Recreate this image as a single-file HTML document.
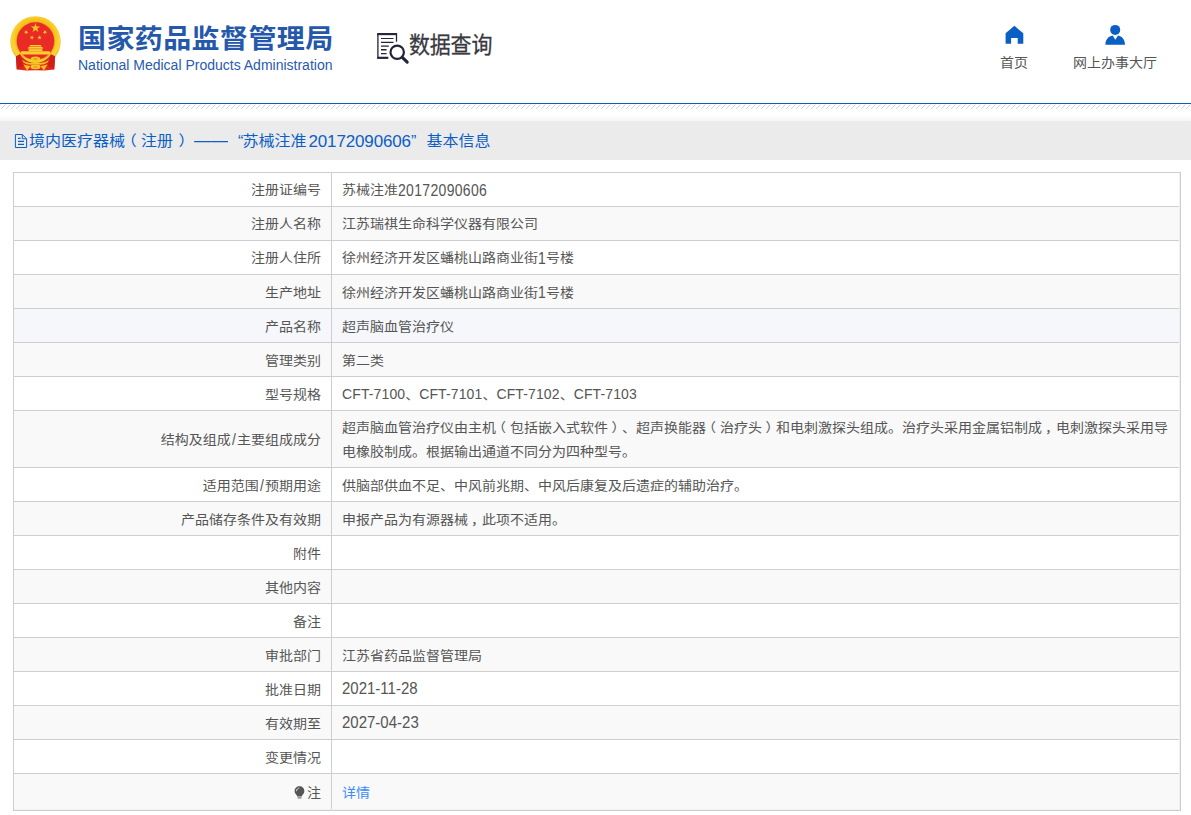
<!DOCTYPE html>
<html lang="zh-CN">
<head>
<meta charset="utf-8">
<title>国家药品监督管理局 数据查询</title>
<style>
*{box-sizing:border-box;margin:0;padding:0}
html,body{width:1191px;height:815px;overflow:hidden;background:#fff}
body{font-family:"Liberation Sans","Noto Sans CJK SC",sans-serif;font-size:14px;color:#555;position:relative}
.abs{position:absolute}
#hdr{position:absolute;left:0;top:0;width:1191px;height:103px;background:#fff}
#emblem{position:absolute;left:0;top:0;width:70px;height:80px}
#cn{position:absolute;left:78px;top:18.500px;transform:scaleY(.95);transform-origin:50% 62%;font-size:28px;line-height:40px;font-weight:700;color:#2558ab;white-space:nowrap;letter-spacing:0.4px}
#en{position:absolute;left:78px;top:56px;font-size:14px;line-height:18px;color:#2a5bad;white-space:nowrap}
#qicon{position:absolute;left:370px;top:25px;width:50px;height:45px}
#qtxt{position:absolute;left:409px;top:28px;transform:scaleY(1.1);transform-origin:50% 50%;font-size:21px;line-height:34px;color:#38383e;-webkit-text-stroke:0.25px #38383e;white-space:nowrap;letter-spacing:-0.2px}
.nav{position:absolute;top:52px;transform:scaleY(.9);font-size:14px;line-height:20px;color:#555;white-space:nowrap;text-align:center}
#blue{position:absolute;left:0;top:103px;width:1191px;height:1px;background:#0860c2}
#hatch{position:absolute;left:0;top:104px;width:1191px;height:5px}
#fade{position:absolute;left:0;top:109px;width:1191px;height:12px;background:linear-gradient(#fff 42%,#f6f6f6)}
#bar{position:absolute;left:0;top:121px;width:1191px;height:39px;background:#ebebeb}
#ttl{position:absolute;left:30px;top:121px;height:39px;line-height:39px;font-size:16px;color:#0b5ec6;white-space:nowrap}
#ttl span{position:absolute;top:0}
#ticon{position:absolute;left:10px;top:125px;width:25px;height:32px}
table{position:absolute;left:13px;top:172px;width:1167px;border-collapse:collapse;table-layout:fixed}
td{border:1px solid #cfcecf;height:34px;line-height:24px;padding:0 10px 0;font-size:14px;color:#555;vertical-align:middle}
td.l{text-align:right;width:318px}
td.r{text-align:left;width:849px}
tr:nth-child(even) td{background:#f9f9f9}
tr:nth-child(5) td{background:#f5f7fb}
tr.dbl td{height:57px}
tr.last td{height:37px}
body{text-spacing-trim:space-all}

.s{display:inline-block;transform:scaleY(.9);transform-origin:50% 50%;white-space:nowrap}
.s.b{display:block;height:24px}
.n{display:inline-block;letter-spacing:.32px;transform:scaleY(1.12);transform-origin:50% 52%}
.d{display:inline-block;font-size:15px;transform:scaleY(1.05);transform-origin:50% 52%}
.m{display:inline-block;letter-spacing:.12px;transform:scaleY(1.08);transform-origin:50% 52%}
i{font-style:normal;position:relative}
.sl{display:inline-block;padding:0 1.200px;transform:scaleY(1.25)}
.pc{left:3px}
.pl{left:-4px}.pr{left:3.500px}
#bulb{vertical-align:middle;margin-right:2px;position:relative;top:-1px}
#l809{position:absolute;left:14px;top:809px;width:1166px;height:1px;background:#eef0f8}
#l1179{position:absolute;left:1179px;top:173px;width:1px;height:637px;background:#eef0f8}
a{color:#3b8cff;text-decoration:none}
</style>
</head>
<body>
<div id="hdr">
<svg id="emblem" viewBox="0 0 70 80" width="70" height="80">
<defs>
<radialGradient id="gold" cx="50%" cy="45%" r="55%"><stop offset="0.70" stop-color="#f6c21c"/><stop offset="0.86" stop-color="#fbd43a"/><stop offset="1" stop-color="#eeb211"/></radialGradient>
</defs>
<circle cx="35.5" cy="41.4" r="25.2" fill="url(#gold)"/>
<circle cx="35.5" cy="41.1" r="19.5" fill="#e9a414"/>
<circle cx="35.5" cy="41" r="18.700" fill="#ea2a24"/>
<g fill="#f3c52a">
<polygon points="35.50,23.00 36.62,26.45 40.26,26.45 37.32,28.59 38.44,32.05 35.50,29.91 32.56,32.05 33.68,28.59 30.74,26.45 34.38,26.45"/>
<polygon points="27.30,30.12 26.94,31.83 28.45,32.70 26.71,32.88 26.35,34.59 25.64,32.99 23.91,33.18 25.20,32.01 24.49,30.42 26.00,31.29"/>
<polygon points="43.80,30.12 45.10,31.29 46.61,30.42 45.90,32.01 47.19,33.18 45.46,32.99 44.75,34.59 44.39,32.88 42.65,32.70 44.16,31.83"/>
<polygon points="32.32,35.24 32.56,36.96 34.28,37.27 32.71,38.03 32.95,39.76 31.74,38.50 30.17,39.27 30.99,37.73 29.78,36.47 31.50,36.78"/>
<polygon points="39.08,35.24 39.90,36.78 41.62,36.47 40.41,37.73 41.23,39.27 39.66,38.50 38.45,39.76 38.69,38.03 37.12,37.27 38.84,36.96"/>
</g>
<g fill="#f8cf30">
<path d="M29.2 46.600 L30.2 45 L40.800 45 L41.800 46.600 Z"/>
<path d="M27.600 48.600 L28.800 46.900 L42.200 46.900 L43.400 48.600 Z"/>
<rect x="28.600" y="48.600" width="13.800" height="2.600"/>
<path d="M20.600 54.600 L21.400 51.200 L49.600 51.200 L50.400 54.600 Z"/>
</g>
<rect x="29" y="48.800" width="13" height="0.900" fill="#f0b21c"/>
<path d="M15.900 56.500 L20 54.300 Q23.500 60 30.500 62.300 L35.500 63 L40.500 62.300 Q47.500 60 51 54.300 L55.100 56.500 L54.200 69.600 L44.500 70.600 L35.500 70.200 L26.500 70.600 L16.800 69.600 Z" fill="#e5281e"/>
<path d="M15.900 56.500 L20 54.300 L23.500 66 L16.800 69.600 Z M55.100 56.500 L51 54.300 L47.500 66 L54.200 69.600 Z" fill="#cf2018"/>
<path d="M22 60 Q28.500 64.800 35.500 61.800 Q42.500 64.800 49 60 L47.500 62.600 Q42 66.200 35.500 64 Q29 66.200 23.500 62.600 Z" fill="#f4c320"/>
<ellipse cx="35.5" cy="59" rx="4.800" ry="2.600" fill="#f5c828"/>
<ellipse cx="35.5" cy="59" rx="2.500" ry="1.200" fill="#eaa818"/>
<ellipse cx="35.5" cy="66.800" rx="5" ry="2.500" fill="#f6cb2c"/>
<ellipse cx="35.5" cy="66.900" rx="2.600" ry="1.100" fill="#e9a818"/>
<path d="M23.400 64.600 L30.500 66.200 L27 70.600 Z M47.600 64.600 L40.500 66.200 L44 70.600 Z" fill="#f4c320"/>
</svg>
<div id="cn">国家药品监督管理局</div>
<div id="en">National Medical Products Administration</div>
<svg id="qicon" viewBox="370 25 50 45" width="50" height="45">
<g fill="none" stroke="#23233a">
<path d="M396.500 41.800 V34.100 H377.900 V57.800 H388.200" stroke-width="1.300"/>
<path d="M377.200 34.100 H397" stroke-width="2.100"/>
<path d="M377.200 57.800 H388.200" stroke-width="2.100"/>
<path d="M381 38.500 H393.500 M381 42.400 H393.500" stroke-width="1.200"/>
<path d="M381 46.100 H388.800 M381 49.800 H386.600 M381 53.600 H386.600" stroke-width="1.400"/>
<circle cx="397.200" cy="52.250" r="6.700" stroke-width="2.200"/>
<path d="M402.300 57.300 L407.200 62.100" stroke-width="3.100" stroke-linecap="round"/>
</g></svg>
<div id="qtxt">数据查询</div>
<svg class="abs" style="left:995px;top:18px" width="40" height="36" viewBox="995 18 40 36"><path d="M1014.400 25.800 L1023.300 33.200 V43.800 H1017.700 V38.100 H1011.100 V43.800 H1005.600 V33.200 Z" fill="#0a5fc4"/></svg>
<svg class="abs" style="left:1095px;top:18px" width="40" height="36" viewBox="1095 18 40 36"><g fill="#0a5fc4"><circle cx="1115.200" cy="29.900" r="5"/><path d="M1105.400 44.800 C1105.400 39.500 1108.500 36.200 1112.700 35.500 L1115.300 39.700 L1118 35.500 C1122 36.200 1125 39.500 1125 44.800 Z"/></g></svg>
<div class="nav" style="left:994px;width:40px">首页</div>
<div class="nav" style="left:1065px;width:100px">网上办事大厅</div>
</div>
<div id="blue"></div><svg id="hatch" width="1191" height="5" viewBox="0 0 1191 5" shape-rendering="crispEdges"><defs><pattern id="hp" width="5" height="5" patternUnits="userSpaceOnUse"><g fill="#d3d3d3"><rect x="0" y="0" width="1" height="1" fill="#f3ebe4"/><rect x="4" y="1" width="1" height="1"/><rect x="3" y="2" width="1" height="1"/><rect x="2" y="3" width="1" height="1"/><rect x="1" y="4" width="1" height="1"/></g></pattern></defs><rect width="1191" height="5" fill="url(#hp)"/></svg><div id="fade"></div>
<div id="bar"></div>
<svg id="ticon" viewBox="10 125 25 32" width="25" height="32"><g fill="none" stroke="#0a5fc4" stroke-width="1"><path d="M22.300 134.500 H15.400 V147.500 H26.600 V138.800 Z"/><path d="M22.300 134.500 V138.800 H26.600"/><path d="M18 138.400 H20.600 M18 141.400 H24 M18 144.400 H24" stroke-width="1.100"/></g></svg>
<div id="ttl"><span id="t1" style="left:-1px;top:1px;transform:scaleY(.9)">境内医疗器械<i style="left:-4.300px">（</i>注册<i style="left:5.500px">）</i></span><span id="t2" style="left:164px;transform:scaleX(1.06);transform-origin:0 50%">——</span><span id="t3" style="left:208px;top:1px">“</span><span id="t4" style="left:212.500px;top:1px;transform:scaleY(.9)">苏械注准</span><span id="t5" style="left:278.500px;font-size:17px;letter-spacing:-0.15px;top:1px">20172090606</span><span id="t6" style="left:381px;top:1px">”</span><span id="t7" style="left:396.600px;top:1px;transform:scaleY(.9)">基本信息</span></div>
<table>
<tr><td class="l"><span class="s">注册证编号</span></td><td class="r"><span class="s">苏械注准</span><span class="n">20172090606</span></td></tr>
<tr><td class="l"><span class="s">注册人名称</span></td><td class="r"><span class="s">江苏瑞祺生命科学仪器有限公司</span></td></tr>
<tr><td class="l"><span class="s">注册人住所</span></td><td class="r"><span class="s">徐州经济开发区蟠桃山路商业街</span><span class="n">1</span><span class="s">号楼</span></td></tr>
<tr><td class="l"><span class="s">生产地址</span></td><td class="r"><span class="s">徐州经济开发区蟠桃山路商业街</span><span class="n">1</span><span class="s">号楼</span></td></tr>
<tr><td class="l"><span class="s">产品名称</span></td><td class="r"><span class="s">超声脑血管治疗仪</span></td></tr>
<tr><td class="l"><span class="s">管理类别</span></td><td class="r"><span class="s">第二类</span></td></tr>
<tr><td class="l"><span class="s">型号规格</span></td><td class="r"><span class="m">CFT-7100</span><span class="s">、</span><span class="m">CFT-7101</span><span class="s">、</span><span class="m">CFT-7102</span><span class="s">、</span><span class="m">CFT-7103</span></td></tr>
<tr class="dbl"><td class="l"><span class="s">结构及组成<i class="sl">/</i>主要组成成分</span></td><td class="r"><span class="s b">超声脑血管治疗仪由主机<i class="pl">（</i>包括嵌入式软件<i class="pr">）</i>、超声换能器<i class="pl">（</i>治疗头<i class="pr">）</i>和电刺激探头组成。治疗头采用金属铝制成<i class="pc">，</i>电刺激探头采用导</span><span class="s b">电橡胶制成。根据输出通道不同分为四种型号。</span></td></tr>
<tr><td class="l"><span class="s">适用范围<i class="sl">/</i>预期用途</span></td><td class="r"><span class="s">供脑部供血不足、中风前兆期、中风后康复及后遗症的辅助治疗。</span></td></tr>
<tr><td class="l"><span class="s">产品储存条件及有效期</span></td><td class="r"><span class="s">申报产品为有源器械<i class="pc">，</i>此项不适用。</span></td></tr>
<tr><td class="l"><span class="s">附件</span></td><td class="r"></td></tr>
<tr><td class="l"><span class="s">其他内容</span></td><td class="r"></td></tr>
<tr><td class="l"><span class="s">备注</span></td><td class="r"></td></tr>
<tr><td class="l"><span class="s">审批部门</span></td><td class="r"><span class="s">江苏省药品监督管理局</span></td></tr>
<tr><td class="l"><span class="s">批准日期</span></td><td class="r"><span class="d">2021-11-28</span></td></tr>
<tr><td class="l"><span class="s">有效期至</span></td><td class="r"><span class="d">2027-04-23</span></td></tr>
<tr><td class="l"><span class="s">变更情况</span></td><td class="r"></td></tr>
<tr class="last"><td class="l"><svg id="bulb" viewBox="0 0 12 14" width="11" height="13"><path d="M6 0.300 C2.900 0.300 0.700 2.600 0.700 5.400 C0.700 7.300 1.700 8.500 2.600 9.500 C3.100 10.100 3.300 10.600 3.400 11.300 H8.600 C8.700 10.600 8.900 10.100 9.400 9.500 C10.300 8.500 11.300 7.300 11.300 5.400 C11.300 2.600 9.100 0.300 6 0.300 Z" fill="#555"/><path d="M2.700 5.600 C2.700 3.600 4.100 2.300 5.800 2.200" fill="none" stroke="#f4f4f4" stroke-width="0.900"/><path d="M3.900 12.900 H8.100" stroke="#555" stroke-width="1.100"/></svg><span class="s">注</span></td><td class="r"><a><span class="s">详情</span></a></td></tr>
</table>
<div id="l809"></div><div id="l1179"></div>
</body>
</html>
